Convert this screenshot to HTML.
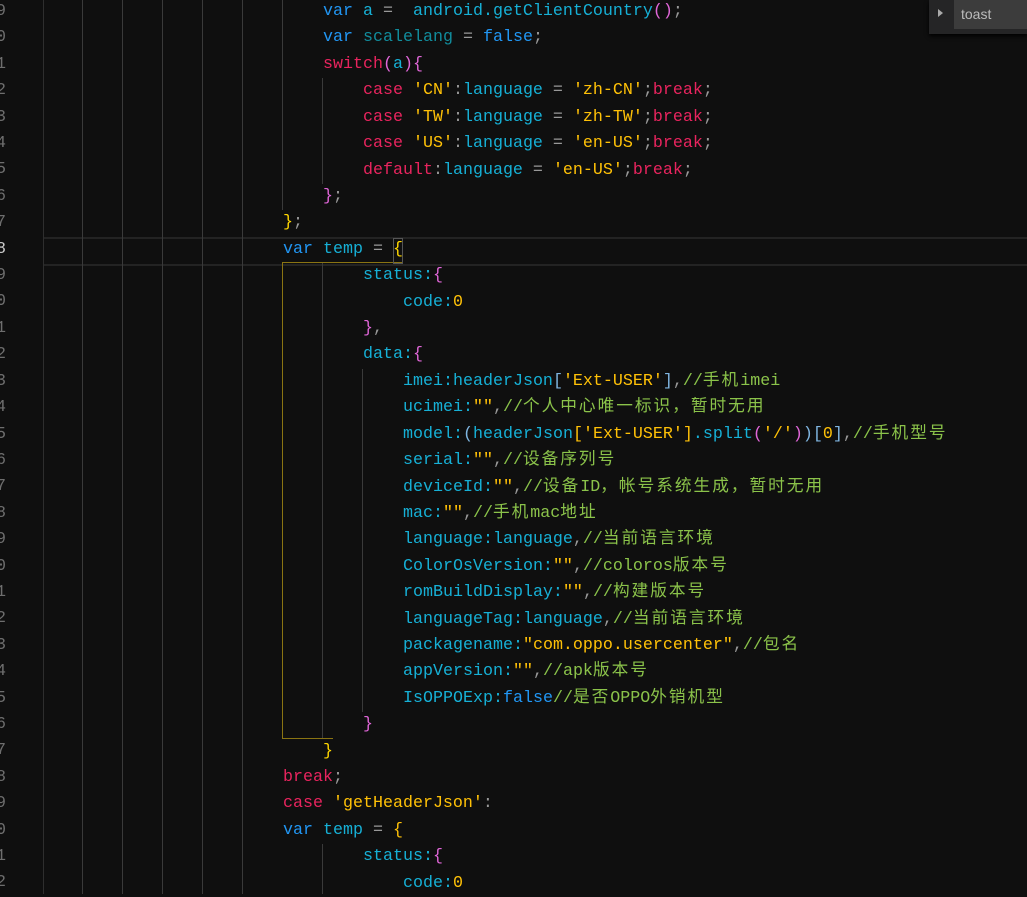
<!DOCTYPE html>
<html><head><meta charset="utf-8"><style>
body{margin:0;width:1027px;height:894px;background:#0f0f0f;overflow:hidden;position:relative;font-family:"Liberation Mono","Noto Sans CJK SC",monospace;font-size:16.67px}
.l{position:absolute;white-space:pre;height:26px;line-height:26px;color:#999}
.n{position:absolute;left:-14px;width:40px;color:#6e6e6e;white-space:pre;line-height:26.4px;font-size:16.67px}
.g{position:absolute;width:1px;background:#3a3a3a}
.v{color:#2196f3}.i{color:#16b0d6}.t{color:#118c9c}.k{color:#e8245e}.s{color:#ffc107}.c{color:#8bc34a}.p{color:#e066d8}.y{color:#ffd700}.b{color:#7fb5e0}
.z{font-size:16.67px;letter-spacing:2px}
</style></head><body>
<div style="position:absolute;left:43px;right:0;top:237px;height:25px;border-top:2px solid #232323;border-bottom:2px solid #232323"></div>
<div class="g" style="left:43px;top:0;height:894px;background:#2e2e2e"></div>
<div class="g" style="left:82px;top:0;height:894px"></div>
<div class="g" style="left:122px;top:0;height:894px"></div>
<div class="g" style="left:162px;top:0;height:894px"></div>
<div class="g" style="left:202px;top:0;height:894px"></div>
<div class="g" style="left:242px;top:0;height:894px"></div>
<div class="g" style="left:282px;top:0;height:210px"></div>
<div class="g" style="left:322px;top:78px;height:106px"></div>
<div class="g" style="left:322px;top:263px;height:476px"></div>
<div class="g" style="left:362px;top:369px;height:343px"></div>
<div class="g" style="left:322px;top:844px;height:50px"></div>
<div style="position:absolute;left:282px;top:262px;width:120px;height:1px;background:#8a7412"></div>
<div style="position:absolute;left:282px;top:262px;width:1px;height:476px;background:#8a7412"></div>
<div style="position:absolute;left:282px;top:738px;width:51px;height:1px;background:#8a7412"></div>
<div style="position:absolute;left:393px;top:238px;width:8px;height:24px;border:1px solid #555"></div>
<div class="n" style="top:-1px">29
30
31
32
33
34
35
36
37
<span style="color:#ccc">38</span>
39
40
41
42
43
44
45
46
47
48
49
50
51
52
53
54
55
56
57
58
59
60
61
62</div>
<div class="l" style="left:323px;top:-1px"><span class="v">var</span> <span class="i">a</span> =  <span class="i">android.getClientCountry</span><span class="p">()</span>;</div>
<div class="l" style="left:323px;top:25px"><span class="v">var</span> <span class="t">scalelang</span> = <span class="v">false</span>;</div>
<div class="l" style="left:323px;top:52px"><span class="k">switch</span><span class="p">(</span><span class="i">a</span><span class="p">){</span></div>
<div class="l" style="left:363px;top:78px"><span class="k">case</span> <span class="s">'CN'</span>:<span class="i">language</span> = <span class="s">'zh-CN'</span>;<span class="k">break</span>;</div>
<div class="l" style="left:363px;top:105px"><span class="k">case</span> <span class="s">'TW'</span>:<span class="i">language</span> = <span class="s">'zh-TW'</span>;<span class="k">break</span>;</div>
<div class="l" style="left:363px;top:131px"><span class="k">case</span> <span class="s">'US'</span>:<span class="i">language</span> = <span class="s">'en-US'</span>;<span class="k">break</span>;</div>
<div class="l" style="left:363px;top:158px"><span class="k">default</span>:<span class="i">language</span> = <span class="s">'en-US'</span>;<span class="k">break</span>;</div>
<div class="l" style="left:323px;top:184px"><span class="p">}</span>;</div>
<div class="l" style="left:283px;top:210px"><span class="y">}</span>;</div>
<div class="l" style="left:283px;top:237px"><span class="v">var</span> <span class="i">temp</span> = <span class="y">{</span></div>
<div class="l" style="left:363px;top:263px"><span class="i">status:</span><span class="p">{</span></div>
<div class="l" style="left:403px;top:290px"><span class="i">code:</span><span class="s">0</span></div>
<div class="l" style="left:363px;top:316px"><span class="p">}</span>,</div>
<div class="l" style="left:363px;top:342px"><span class="i">data:</span><span class="p">{</span></div>
<div class="l" style="left:403px;top:369px"><span class="i">imei:headerJson</span><span class="b">[</span><span class="s">'Ext-USER'</span><span class="b">]</span>,<span class="c">//<span class="z">手机</span>imei</span></div>
<div class="l" style="left:403px;top:395px"><span class="i">ucimei:</span><span class="s">""</span>,<span class="c">//<span class="z">个人中心唯一标识，暂时无用</span></span></div>
<div class="l" style="left:403px;top:422px"><span class="i">model:</span><span class="b">(</span><span class="i">headerJson</span><span class="s">[</span><span class="s">'Ext-USER'</span><span class="s">]</span><span class="i">.split</span><span class="p">(</span><span class="s">'/'</span><span class="p">)</span><span class="b">)</span><span class="b">[</span><span class="s">0</span><span class="b">]</span>,<span class="c">//<span class="z">手机型号</span></span></div>
<div class="l" style="left:403px;top:448px"><span class="i">serial:</span><span class="s">""</span>,<span class="c">//<span class="z">设备序列号</span></span></div>
<div class="l" style="left:403px;top:475px"><span class="i">deviceId:</span><span class="s">""</span>,<span class="c">//<span class="z">设备</span>ID<span class="z">，帐号系统生成，暂时无用</span></span></div>
<div class="l" style="left:403px;top:501px"><span class="i">mac:</span><span class="s">""</span>,<span class="c">//<span class="z">手机</span>mac<span class="z">地址</span></span></div>
<div class="l" style="left:403px;top:527px"><span class="i">language:language</span>,<span class="c">//<span class="z">当前语言环境</span></span></div>
<div class="l" style="left:403px;top:554px"><span class="i">ColorOsVersion:</span><span class="s">""</span>,<span class="c">//coloros<span class="z">版本号</span></span></div>
<div class="l" style="left:403px;top:580px"><span class="i">romBuildDisplay:</span><span class="s">""</span>,<span class="c">//<span class="z">构建版本号</span></span></div>
<div class="l" style="left:403px;top:607px"><span class="i">languageTag:language</span>,<span class="c">//<span class="z">当前语言环境</span></span></div>
<div class="l" style="left:403px;top:633px"><span class="i">packagename:</span><span class="s">"com.oppo.usercenter"</span>,<span class="c">//<span class="z">包名</span></span></div>
<div class="l" style="left:403px;top:659px"><span class="i">appVersion:</span><span class="s">""</span>,<span class="c">//apk<span class="z">版本号</span></span></div>
<div class="l" style="left:403px;top:686px"><span class="i">IsOPPOExp:</span><span class="v">false</span><span class="c">//<span class="z">是否</span>OPPO<span class="z">外销机型</span></span></div>
<div class="l" style="left:363px;top:712px"><span class="p">}</span></div>
<div class="l" style="left:323px;top:739px"><span class="y">}</span></div>
<div class="l" style="left:283px;top:765px"><span class="k">break</span>;</div>
<div class="l" style="left:283px;top:791px"><span class="k">case</span> <span class="s">'getHeaderJson'</span>:</div>
<div class="l" style="left:283px;top:818px"><span class="v">var</span> <span class="i">temp</span> = <span class="s">{</span></div>
<div class="l" style="left:363px;top:844px"><span class="i">status:</span><span class="p">{</span></div>
<div class="l" style="left:403px;top:871px"><span class="i">code:</span><span class="s">0</span></div>
<div style="position:absolute;left:929px;top:0;width:98px;height:34px;background:#252526;box-shadow:0 2px 4px #000"></div>
<div style="position:absolute;left:954px;top:0;width:73px;height:29px;background:#3c3c3c"></div>
<div style="position:absolute;left:938px;top:9px;width:0;height:0;border-left:5px solid #aaa;border-top:4px solid transparent;border-bottom:4px solid transparent"></div>
<div style="position:absolute;left:961px;top:6px;color:#bbb;font-family:'Liberation Sans',sans-serif;font-size:14px">toast</div>
</body></html>
